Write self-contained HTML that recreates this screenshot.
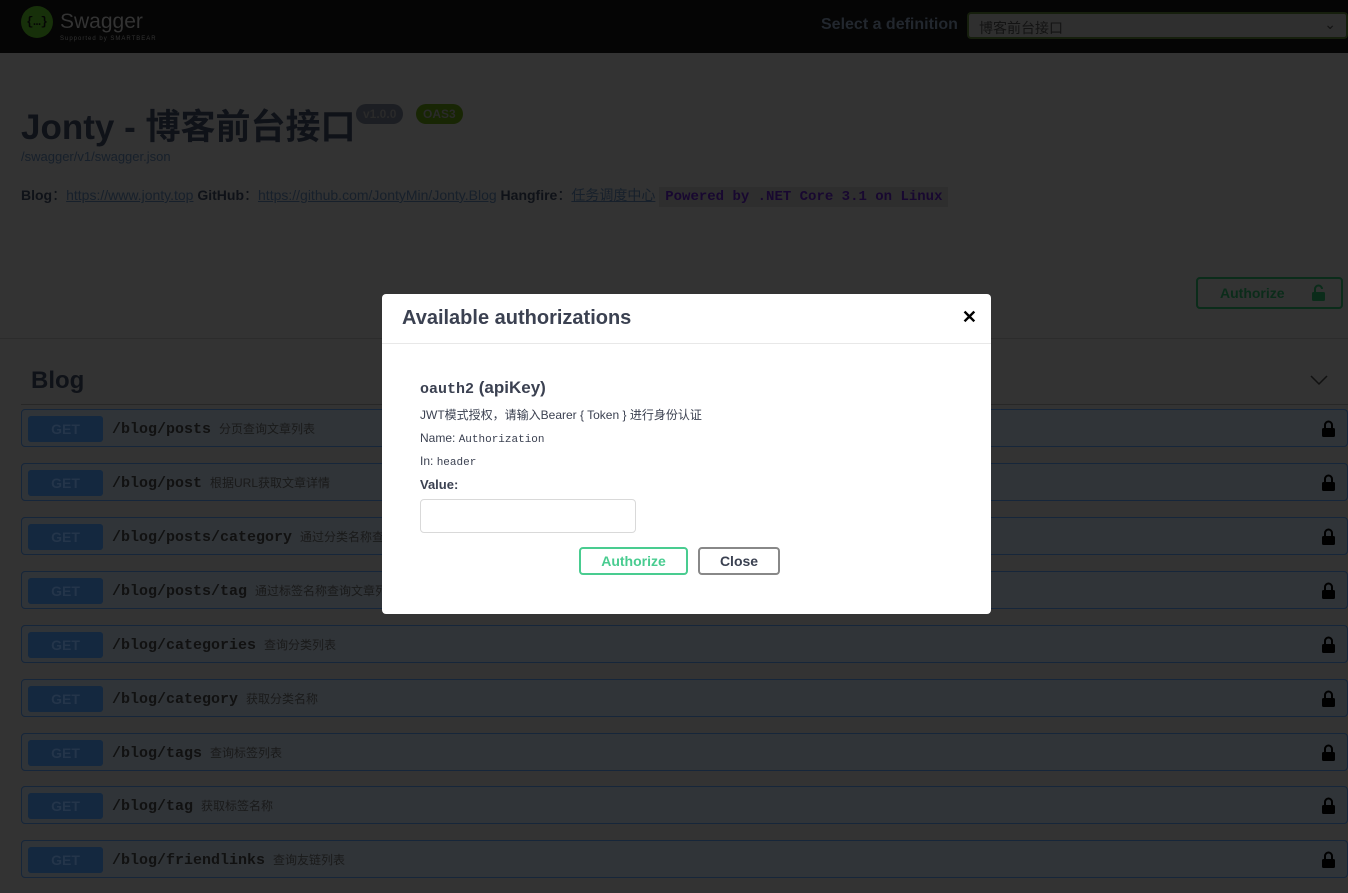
<!DOCTYPE html>
<html><head><meta charset="utf-8"><style>
*{box-sizing:border-box;margin:0;padding:0}
body{width:1348px;height:893px;overflow:hidden;background:#333;font-family:"Liberation Sans","Noto Sans CJK SC",sans-serif;position:relative}
.top{position:absolute;left:0;top:0;width:1348px;height:53px;background:#050505}
.logo{position:absolute;left:21px;top:6px;width:32px;height:32px;border-radius:50%;background:#17300a;color:#050505;font:bold 12px "Liberation Mono",monospace;text-align:center;line-height:32px}
.sw{position:absolute;left:60px;top:10px;color:#333;font-size:21px}
.sb{position:absolute;left:60px;top:36px;color:#333;font-size:6px;letter-spacing:1px}
.sel{position:absolute;left:821px;top:16px;color:#22272e;font-weight:bold;font-size:16px}
.dd{position:absolute;left:967px;top:12px;width:381px;height:27px;background:#2f2f2f;border:2px solid #161f0d;border-radius:4px;color:#131313;font-size:14px;padding:4px 10px}
h1{position:absolute;left:21px;top:99px;font-size:35px;color:#0f1218;font-weight:bold}
.badge{position:absolute;top:104px;height:20px;border-radius:10px;font-size:12px;font-weight:bold;line-height:20px;padding:0 7px;color:#2a2a2a}
.url{position:absolute;left:21px;top:149px;font-size:13px;color:#17202b}
.info{position:absolute;left:21px;top:185px;font-size:14px;color:#0f1218;white-space:nowrap}
.info a{color:#17202b;text-decoration:underline}
.info code{font:bold 14px "Liberation Mono",monospace;color:#180830;background:#2e2e2e;padding:2px 6px}
.authb{position:absolute;left:1196px;top:277px;width:147px;height:32px;border:2px solid #0b2c1a;border-radius:4px;color:#0b2c1a;font-weight:bold;font-size:14px;padding:6px 22px}
.hr1{position:absolute;left:0;top:338px;width:1348px;height:1px;background:#2c2c2c}
.blog{position:absolute;left:31px;top:367px;font-size:24px;font-weight:bold;color:#0f1218}
.hr2{position:absolute;left:21px;top:404px;width:1327px;height:1px;background:#272727}
.row{position:absolute;left:21px;width:1327px;height:38px;background:#303438;border:1px solid #16263a;border-radius:4px}
.get{position:absolute;left:6px;top:6px;width:75px;height:26px;background:#14283f;border-radius:3px;color:#24354a;font-weight:bold;font-size:14px;text-align:center;line-height:26px}
.p{position:absolute;left:90px;top:10px;font:bold 15px "Liberation Mono",monospace;color:#111;white-space:nowrap}
.p span{font:12px "Liberation Sans","Noto Sans CJK SC",sans-serif;color:#1a1a1a;margin-left:8px}
.lock{position:absolute;right:12px;top:10px;width:13px;height:17px}
.modal{position:absolute;left:382px;top:294px;width:609px;height:320px;background:#fff;border-radius:4px}
.mh{height:50px;border-bottom:1px solid #e8e8e8;padding:13px 20px;font-size:20px;font-weight:bold;color:#3b4151}
.x{position:absolute;right:14px;top:13px;font-size:18px;font-weight:bold;color:#000}
.mb{position:absolute;left:38px;top:84px;color:#3b4151}
.mb h4{font-size:17px;font-weight:bold}
.mb h4 code{font:bold 15px "Liberation Mono",monospace}
.mb p{font-size:12px;margin-top:8px}
.mb p code{font:11px "Liberation Mono",monospace}
.inp{position:absolute;left:38px;top:205px;width:216px;height:34px;border:1px solid #d9d9d9;border-radius:4px}
.b1{position:absolute;left:197px;top:253px;width:109px;height:28px;border:2px solid #49cc90;border-radius:4px;color:#49cc90;font-weight:bold;font-size:14px;text-align:center;line-height:24px}
.b2{position:absolute;left:316px;top:253px;width:82px;height:28px;border:2px solid #888;border-radius:4px;color:#3b4151;font-weight:bold;font-size:14px;text-align:center;line-height:24px}
</style></head><body>
<div class="top"><div class="logo">{…}</div><div class="sw">Swagger</div><div class="sb">Supported by SMARTBEAR</div>
<div class="sel">Select a definition</div><div class="dd">博客前台接口<span style="position:absolute;right:10px;top:2px">⌄</span></div></div>
<h1>Jonty - 博客前台接口</h1>
<div class="badge" style="left:356px;background:#1c1e23">v1.0.0</div>
<div class="badge" style="left:416px;background:#182604">OAS3</div>
<div class="url">/swagger/v1/swagger.json</div>
<div class="info"><b>Blog</b>：<a>https://www.jonty.top</a> <b>GitHub</b>：<a>https://github.com/JontyMin/Jonty.Blog</a> <b>Hangfire</b>：<a>任务调度中心</a> <code>Powered by .NET Core 3.1 on Linux</code></div>
<div class="authb">Authorize <svg style="position:absolute;right:16px;top:5px" width="13" height="17" viewBox="0 0 13 17"><path d="M3 8V5a3.5 3.5 0 0 1 7 0" stroke="#0b2c1a" stroke-width="2" fill="none"/><rect x="0" y="8" width="13" height="9" rx="1.5" fill="#0b2c1a"/></svg></div>
<div class="hr1"></div>
<div class="blog">Blog</div>
<svg style="position:absolute;left:1310px;top:374px" width="18" height="12" viewBox="0 0 18 12"><path d="M1 2l8 8 8-8" stroke="#111" stroke-width="1.5" fill="none"/></svg>
<div class="hr2"></div>
<div class="row" style="top:409px"><div class="get">GET</div><div class="p">/blog/posts<span>分页查询文章列表</span></div><svg class="lock" viewBox="0 0 13 17"><path d="M3 8V5a3.5 3.5 0 0 1 7 0v3" stroke="#000" stroke-width="2" fill="none"/><rect y="8" width="13" height="9" rx="1.5"/></svg></div>
<div class="row" style="top:463px"><div class="get">GET</div><div class="p">/blog/post<span>根据URL获取文章详情</span></div><svg class="lock" viewBox="0 0 13 17"><path d="M3 8V5a3.5 3.5 0 0 1 7 0v3" stroke="#000" stroke-width="2" fill="none"/><rect y="8" width="13" height="9" rx="1.5"/></svg></div>
<div class="row" style="top:517px"><div class="get">GET</div><div class="p">/blog/posts/category<span>通过分类名称查询文章列表</span></div><svg class="lock" viewBox="0 0 13 17"><path d="M3 8V5a3.5 3.5 0 0 1 7 0v3" stroke="#000" stroke-width="2" fill="none"/><rect y="8" width="13" height="9" rx="1.5"/></svg></div>
<div class="row" style="top:571px"><div class="get">GET</div><div class="p">/blog/posts/tag<span>通过标签名称查询文章列表</span></div><svg class="lock" viewBox="0 0 13 17"><path d="M3 8V5a3.5 3.5 0 0 1 7 0v3" stroke="#000" stroke-width="2" fill="none"/><rect y="8" width="13" height="9" rx="1.5"/></svg></div>
<div class="row" style="top:625px"><div class="get">GET</div><div class="p">/blog/categories<span>查询分类列表</span></div><svg class="lock" viewBox="0 0 13 17"><path d="M3 8V5a3.5 3.5 0 0 1 7 0v3" stroke="#000" stroke-width="2" fill="none"/><rect y="8" width="13" height="9" rx="1.5"/></svg></div>
<div class="row" style="top:679px"><div class="get">GET</div><div class="p">/blog/category<span>获取分类名称</span></div><svg class="lock" viewBox="0 0 13 17"><path d="M3 8V5a3.5 3.5 0 0 1 7 0v3" stroke="#000" stroke-width="2" fill="none"/><rect y="8" width="13" height="9" rx="1.5"/></svg></div>
<div class="row" style="top:733px"><div class="get">GET</div><div class="p">/blog/tags<span>查询标签列表</span></div><svg class="lock" viewBox="0 0 13 17"><path d="M3 8V5a3.5 3.5 0 0 1 7 0v3" stroke="#000" stroke-width="2" fill="none"/><rect y="8" width="13" height="9" rx="1.5"/></svg></div>
<div class="row" style="top:786px"><div class="get">GET</div><div class="p">/blog/tag<span>获取标签名称</span></div><svg class="lock" viewBox="0 0 13 17"><path d="M3 8V5a3.5 3.5 0 0 1 7 0v3" stroke="#000" stroke-width="2" fill="none"/><rect y="8" width="13" height="9" rx="1.5"/></svg></div>
<div class="row" style="top:840px"><div class="get">GET</div><div class="p">/blog/friendlinks<span>查询友链列表</span></div><svg class="lock" viewBox="0 0 13 17"><path d="M3 8V5a3.5 3.5 0 0 1 7 0v3" stroke="#000" stroke-width="2" fill="none"/><rect y="8" width="13" height="9" rx="1.5"/></svg></div>
<div class="modal">
<div class="mh">Available authorizations</div><div class="x">✕</div>
<div class="mb"><h4><code>oauth2</code> (apiKey)</h4>
<p>JWT模式授权，请输入Bearer { Token } 进行身份认证</p>
<p>Name: <code>Authorization</code></p>
<p>In: <code>header</code></p>
<p style="font-weight:bold;font-size:13px">Value:</p></div>
<div class="inp"></div>
<div class="b1">Authorize</div><div class="b2">Close</div>
</div>
</body></html>
